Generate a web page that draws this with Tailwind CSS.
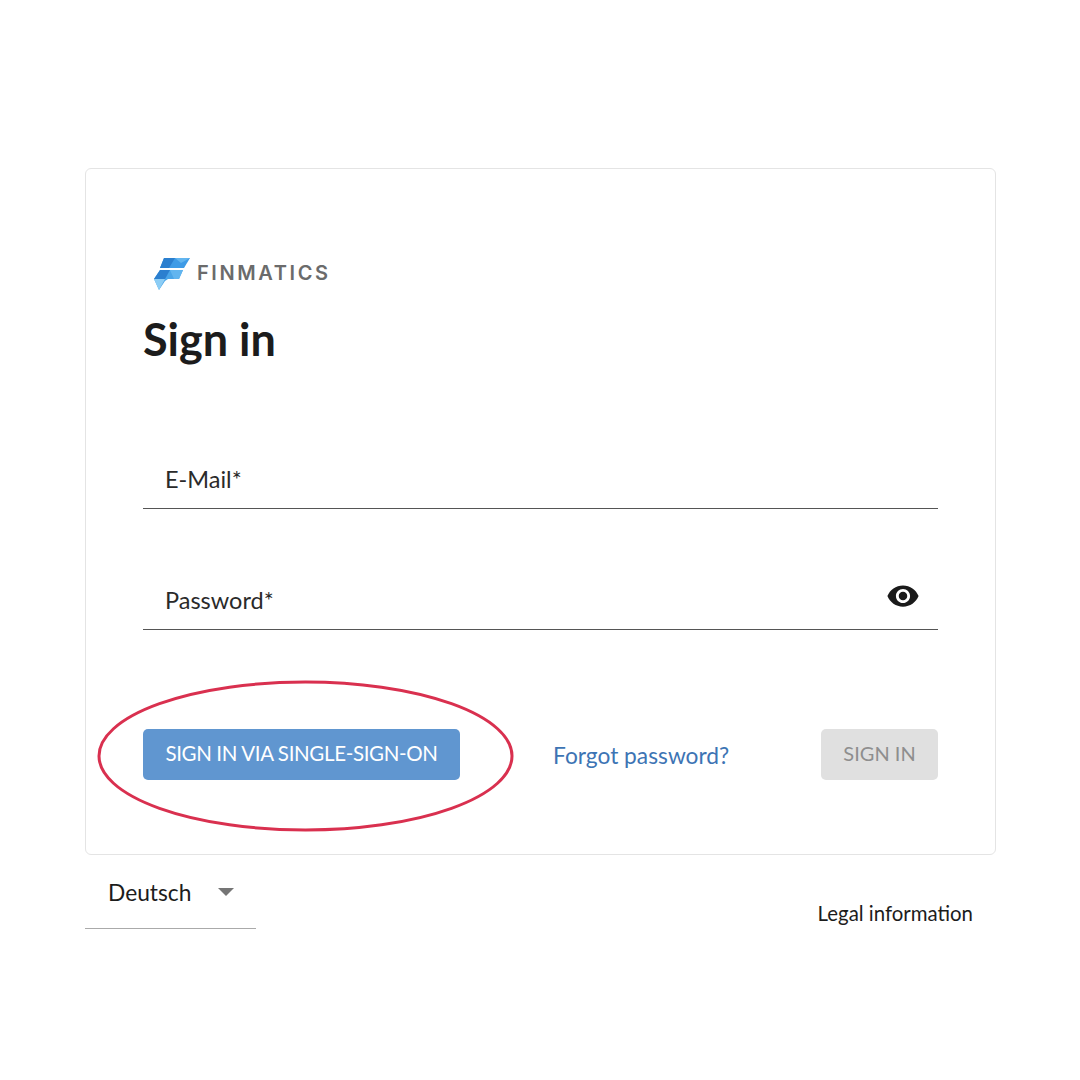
<!DOCTYPE html>
<html lang="en">
<head>
  <meta charset="UTF-8" />
  <title>Sign in | Finmatics</title>
  <script src="https://cdn.jsdelivr.net/npm/@tailwindcss/browser@4"></script>
</head>
<body class="bg-white font-['Lato',sans-serif] text-[#1c1c1c]">
  <div class="relative w-[1080px] h-[1080px] pt-[168px] pl-[85px] overflow-hidden">
    <!-- card -->
    <div class="w-[911px] h-[687px] border border-[#e4e4e4] rounded-[6px] pl-[57px] pr-[57px] pt-[88px]">
      <div class="flex items-center gap-[7px] pl-[11px] h-[34px]">
        <svg width="36" height="34" viewBox="0 0 36 34">
          <path d="M10 1H36L30 11H6Z" fill="#3f9be6"/>
          <path d="M10 1H21L15 11H6Z" fill="#2b7fcf"/>
          <path d="M21 1H36L27 6Z" fill="#62b5ef"/>
          <path d="M6 13H29L25 22H14L11 24L5 33L0 22Z" fill="#4aa5e8"/>
          <path d="M6 13H16L11 22H0Z" fill="#2b7fcf"/>
          <path d="M16 13H29L25 22H20Z" fill="#62b5ef"/>
          <path d="M0 22H11L5 33Z" fill="#8ccdf5"/>
        </svg>
        <span class="-mt-[3px] font-['Inter',sans-serif] font-semibold text-[20px] tracking-[2.6px] text-[#6b6b6b]">FINMATICS</span>
      </div>
      <h1 class="mt-[20px] text-[45px] leading-[56px] font-bold text-[#1c1c1c]">Sign in</h1>

      <div class="mt-[86px] h-[56px] border-b border-[#555] pl-[22px] pt-[11px] text-[23.5px] leading-[30px] text-[#2a2a2a]">E-Mail*</div>

      <div class="mt-[65px] h-[56px] border-b border-[#555] pl-[22px] pr-[18px] pt-[11px] flex justify-between text-[23.5px] leading-[30px] text-[#2a2a2a]">
        <span>Password*</span>
        <svg class="-mt-[6px]" width="34" height="34" viewBox="0 0 24 24" fill="#1a1a1a">
          <path d="M12 4.5C7 4.5 2.73 7.61 1 12c1.73 4.39 6 7.5 11 7.5s9.27-3.11 11-7.5c-1.73-4.39-6-7.5-11-7.5zM12 17c-2.76 0-5-2.24-5-5s2.24-5 5-5 5 2.24 5 5-2.24 5-5 5zm0-8c-1.66 0-3 1.34-3 3s1.34 3 3 3 3-1.34 3-3-1.34-3-3-3z"/>
        </svg>
      </div>

      <div class="mt-[99px] flex items-center">
        <button class="w-[317px] h-[51px] pb-[3px] rounded-[5px] bg-[#6096d0] text-white text-[20.5px] tracking-[-0.35px]">SIGN IN VIA SINGLE-SIGN-ON</button>
        <a class="ml-[93px] text-[22.75px] text-[#3d74b4] mt-[3px]">Forgot password?</a>
        <button class="ml-auto w-[117px] h-[51px] pb-[3px] rounded-[5px] bg-[#e0e0e0] text-[#8e8e8e] text-[20px]">SIGN IN</button>
      </div>
    </div>

    <!-- footer -->
    <div class="w-[911px] flex justify-between">
      <div class="w-[171px] h-[74px] border-b border-[#aaa] pl-[23px] pt-[23px] flex text-[22.75px] leading-[30px]">
        <span>Deutsch</span>
        <svg class="ml-[27px] mt-[10px]" width="16" height="8" viewBox="0 0 16 8"><path d="M0 0H16L8 8Z" fill="#757575"/></svg>
      </div>
      <span class="mt-[44px] mr-[23px] text-[20.4px] leading-[28px]">Legal information</span>
    </div>

    <!-- red highlight round the SSO button -->
    <svg class="absolute left-[96px] top-[679px]" width="420" height="154" viewBox="0 0 420 154" fill="none">
      <ellipse cx="209.5" cy="77" rx="206.5" ry="74" stroke="#d9304f" stroke-width="3"/>
    </svg>
  </div>
</body>
</html>
